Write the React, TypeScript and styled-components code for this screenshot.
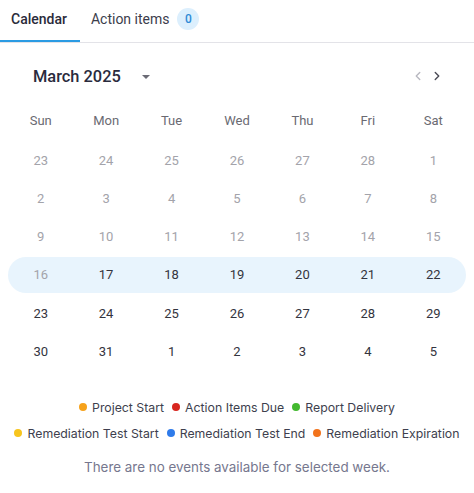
import React from 'react'
import styled, { createGlobalStyle } from 'styled-components'

const GlobalStyle = createGlobalStyle`
  body {
    margin: 0;
    background: #ffffff;
    font-family: Roboto, 'Noto Sans', sans-serif;
  }
`

const Page = styled.div`
  width: 474px;
  height: 493px;
  overflow: hidden;
  background: #fff;
`

const Tabs = styled.div`
  display: flex;
  height: 42px;
  border-bottom: 1px solid #e3e3e8;
`

const Tab = styled.div<{ $active?: boolean }>`
  display: flex;
  align-items: center;
  gap: 8px;
  padding: 0 13px 4px 11px;
  font-size: 14px;
  font-weight: ${(p) => (p.$active ? 500 : 400)};
  color: ${(p) => (p.$active ? '#2a2b3a' : '#3c3d4c')};
  box-shadow: ${(p) => (p.$active ? 'inset 0 -2px 0 #2b9be3' : 'none')};
`

const Badge = styled.span`
  display: inline-flex;
  align-items: center;
  justify-content: center;
  width: 22px;
  height: 22px;
  border-radius: 50%;
  background: #dceffd;
  color: #2f8ad6;
  font-size: 12px;
  font-weight: 500;
`

const CalendarWrap = styled.div`
  padding: 0 8px;
`

const MonthBar = styled.div`
  display: flex;
  align-items: center;
  justify-content: space-between;
  height: 32px;
  margin-top: 17px;
  padding: 0 22px 0 25px;
`

const MonthTitle = styled.div`
  display: flex;
  align-items: center;
  gap: 21px;
  font-size: 16.4px;
  font-weight: 500;
  color: #2a2b3d;
`

const Caret = styled.span`
  width: 0;
  height: 0;
  border-left: 4px solid transparent;
  border-right: 4px solid transparent;
  border-top: 4px solid #6b6b75;
  margin-top: 1px;
`

const Arrows = styled.div`
  display: flex;
  gap: 5px;
`

const ArrowBtn = styled.span<{ $muted?: boolean }>`
  display: flex;
  color: ${(p) => (p.$muted ? '#b8b8c0' : '#4a4a55')};
`

const Grid = styled.div`
  display: grid;
  grid-template-columns: repeat(7, 1fr);
`

const HeadCell = styled.div`
  height: 40px;
  margin-top: 8px;
  display: flex;
  align-items: center;
  justify-content: center;
  font-size: 13px;
  color: #6a6a72;
`

const Weeks = styled.div`
  display: flex;
  flex-direction: column;
  gap: 2.3px;
  padding-top: 2px;
`

const Week = styled.div<{ $selected?: boolean }>`
  display: grid;
  grid-template-columns: repeat(7, 1fr);
  height: 36px;
  border-radius: 18px;
  background: ${(p) => (p.$selected ? '#e8f4fd' : 'transparent')};
`

const DayCell = styled.div<{ $muted?: boolean }>`
  display: flex;
  align-items: center;
  justify-content: center;
  font-size: 13px;
  color: ${(p) => (p.$muted ? '#a3a3aa' : '#33343e')};
`

const Legend = styled.div`
  display: flex;
  flex-direction: column;
  align-items: center;
  gap: 8px;
  margin-top: 29px;
  font-family: Inter, 'Noto Sans', sans-serif;
  font-size: 12.3px;
  color: #3e3f4e;
`

const LegendRow = styled.div`
  display: flex;
  gap: 8px;
`

const LegendItem = styled.div`
  display: flex;
  align-items: center;
  gap: 5px;
  height: 18px;
`

const Dot = styled.span<{ $color: string }>`
  width: 8px;
  height: 8px;
  border-radius: 50%;
  background: ${(p) => p.$color};
`

const Empty = styled.div`
  margin-top: 17px;
  text-align: center;
  font-family: Inter, 'Noto Sans', sans-serif;
  font-size: 13.4px;
  color: #76778e;
`

const Chevron = ({ dir }: { dir: 'left' | 'right' }) => (
  <svg width="14" height="14" viewBox="0 0 24 24" fill="none" stroke="currentColor" strokeWidth="2.4" strokeLinecap="round" strokeLinejoin="round">
    {dir === 'left' ? <path d="M15 6l-6 6 6 6" /> : <path d="M9 6l6 6-6 6" />}
  </svg>
)

const days = ['Sun', 'Mon', 'Tue', 'Wed', 'Thu', 'Fri', 'Sat']

type Day = { n: number; muted?: boolean }

const weeks: Day[][] = [
  [23, 24, 25, 26, 27, 28, 1].map((n) => ({ n, muted: true })),
  [2, 3, 4, 5, 6, 7, 8].map((n) => ({ n, muted: true })),
  [9, 10, 11, 12, 13, 14, 15].map((n) => ({ n, muted: true })),
  [16, 17, 18, 19, 20, 21, 22].map((n, i) => ({ n, muted: i === 0 })),
  [23, 24, 25, 26, 27, 28, 29].map((n) => ({ n })),
  [30, 31, 1, 2, 3, 4, 5].map((n) => ({ n })),
]

const legendRows = [
  [
    { label: 'Project Start', color: '#f6a21b' },
    { label: 'Action Items Due', color: '#d8261f' },
    { label: 'Report Delivery', color: '#43b92f' },
  ],
  [
    { label: 'Remediation Test Start', color: '#f7c51e' },
    { label: 'Remediation Test End', color: '#2f7bea' },
    { label: 'Remediation Expiration', color: '#f2731c' },
  ],
]

export default function App() {
  return (
    <Page>
      <GlobalStyle />
      <Tabs>
        <Tab $active>Calendar</Tab>
        <Tab>
          Action items <Badge>0</Badge>
        </Tab>
      </Tabs>
      <CalendarWrap>
        <MonthBar>
          <MonthTitle>
            March 2025
            <Caret />
          </MonthTitle>
          <Arrows>
            <ArrowBtn $muted>
              <Chevron dir="left" />
            </ArrowBtn>
            <ArrowBtn>
              <Chevron dir="right" />
            </ArrowBtn>
          </Arrows>
        </MonthBar>
        <Grid>
          {days.map((d) => (
            <HeadCell key={d}>{d}</HeadCell>
          ))}
        </Grid>
        <Weeks>
          {weeks.map((w, wi) => (
            <Week key={wi} $selected={wi === 3}>
              {w.map((d, di) => (
                <DayCell key={di} $muted={d.muted}>
                  {d.n}
                </DayCell>
              ))}
            </Week>
          ))}
        </Weeks>
      </CalendarWrap>
      <Legend>
        {legendRows.map((row, ri) => (
          <LegendRow key={ri}>
            {row.map((l) => (
              <LegendItem key={l.label}>
                <Dot $color={l.color} />
                {l.label}
              </LegendItem>
            ))}
          </LegendRow>
        ))}
      </Legend>
      <Empty>There are no events available for selected week.</Empty>
    </Page>
  )
}
